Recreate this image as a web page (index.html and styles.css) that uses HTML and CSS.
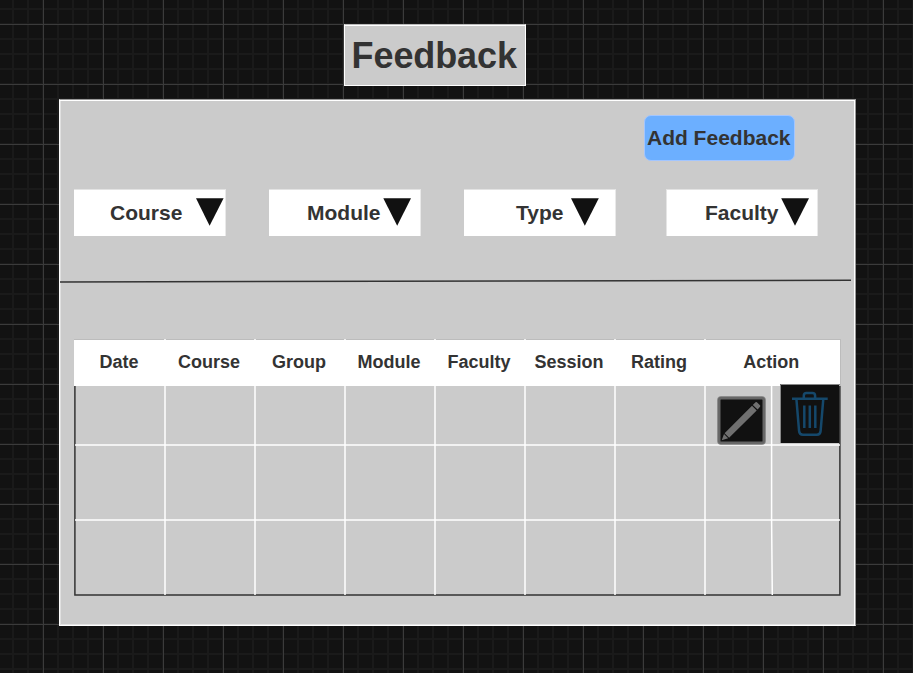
FILE: index.html
```html
<!DOCTYPE html>
<html lang="en">
<head>
<meta charset="utf-8">
<title>Feedback</title>
<link rel="stylesheet" href="styles.css">
</head>
<body>
<h1 class="title">Feedback</h1>
<main class="panel">
  <div class="toolbar"><button class="add">Add Feedback</button></div>
  <div class="filters">
    <div class="filter course"><span>Course</span><svg class="arrow" viewBox="0 0 28 28"><path d="M0 .3H27.6L13.6 27.8z"/></svg></div>
    <div class="filter module"><span>Module</span><svg class="arrow" viewBox="0 0 28 28"><path d="M.3 .3H28L14.2 27.8z"/></svg></div>
    <div class="filter type"><span>Type</span><svg class="arrow" viewBox="0 0 28 28"><path d="M0 .3H27.8L13.8 27.8z"/></svg></div>
    <div class="filter faculty"><span>Faculty</span><svg class="arrow" viewBox="0 0 28 28"><path d="M.2 .3H28L14 27.8z"/></svg></div>
  </div>
  <svg class="divider" viewBox="0 0 792 4"><path d="M0 2.9L791 1.2"/></svg>
  <section class="table">
    <div class="head">
      <span>Date</span><span>Course</span><span>Group</span><span>Module</span><span>Faculty</span><span>Session</span><span>Rating</span><span class="action">Action</span>
    </div>
    <div class="body">
      <svg class="rules" viewBox="0 0 767 257">
        <path class="frame" d="M.9 47V255.9H765.9V47"/>
        <path class="line" d="M91 0V256M181 0V256M271 0V256M361 0V256M451 0V256M541 0V256M631 0V256M697.6 47V181L698.3 256M1 105.9H766M1 180.9H766"/>
      </svg>
      <svg class="edit" viewBox="0 0 49 49">
        <rect x="2" y="2" width="45" height="45" rx="2" fill="#111" stroke="#666" stroke-width="3"/>
        <rect x=".6" y=".6" width="47.8" height="47.8" rx="3" fill="none" stroke="#858585" stroke-width=".7"/>
        <path fill="#707070" d="M4.7 44.3L7 38L11.2 42.2zM7.6 37.3L35 9.8L39.7 14.4L12.1 41.7zM35.8 8.9L38.5 6.2Q39.2 5.6 39.9 6.2L43 9.2Q43.6 9.9 43 10.7L40.6 13.5z"/>
      </svg>
      <svg class="delete" viewBox="0 0 60 60">
        <path fill="#111" d="M0 0H59.3V59H0z"/>
        <path fill="none" stroke="#888" d="M.5 59V.5H60"/>
        <g fill="none" stroke="#15486b" stroke-width="2.5">
          <path d="M12 14.8H47.7M23.8 14V11.7Q23.8 9 26.5 9H32.4Q35.1 9 35.1 11.7V14M16.4 15L19.1 47.2Q19.4 50.8 22.8 50.8H37Q40.3 50.8 40.6 47.2L43.3 15"/>
          <path d="M24.3 21.5V44M29.8 21.5V44M35.3 21.5V44"/>
        </g>
      </svg>
    </div>
  </section>
</main>
</body>
</html>
```
FILE: styles.css
```css
* { box-sizing: border-box; }

body {
  margin: 0;
  height: 673px;
  overflow: hidden;
  display: flex;
  flex-direction: column;
  padding: 24px 0 0 59px;
  font-family: "Liberation Sans", Arial, sans-serif;
  font-weight: bold;
  color: #333;
  background-color: #121212;
  background-image:
    linear-gradient(90deg, #3b3b3b 1px, transparent 1px),
    linear-gradient(#3b3b3b 1px, transparent 1px),
    linear-gradient(90deg, #1a1a1a 2px, transparent 2px),
    linear-gradient(#1a1a1a 2px, transparent 2px);
  background-size: 60px 60px, 60px 60px, 15px 15px, 15px 15px;
  background-position: 43px 0, 0 24px, 12px 0, 0 8px;
}

svg { display: block; }

.title {
  width: 182px;
  height: 62px;
  margin: 0 0 13px 285px;
  padding-left: 6.6px;
  border: 1px solid #fff;
  border-top-color: #bbb;
  box-shadow: inset 0 1px #fff;
  background: #cbcbcb;
  font-size: 36px;
  letter-spacing: -0.1px;
  line-height: 61px;
}

.panel {
  width: 797px;
  height: 527px;
  padding: 15px 0 0 14px;
  border: 1px solid #fff;
  border-top-color: #999;
  border-right-color: #999;
  box-shadow: inset 0 1px #fff, inset -1px 0 #fff, inset 1px 0 #e0e0e0, inset 0 -1px #e4e4e4;
  background: #cbcbcb;
}

.toolbar { padding-left: 570px; }

.add {
  display: block;
  width: 151px;
  height: 46px;
  padding: 0 1.5px 1px 0;
  border: 1px solid #a3c6ff;
  border-radius: 7px;
  background: #6cafff;
  color: #333;
  font: bold 21px "Liberation Sans", Arial, sans-serif;
  white-space: nowrap;
}

.filters { display: flex; margin-top: 28px; }

.filter {
  display: flex;
  width: 152px;
  height: 47px;
  margin-right: 43px;
  border-top: 1px solid #e3e3e3;
  border-right: 1px solid #e9e9e9;
  background: #fff;
  font-size: 21px;
  line-height: 46px;
}

.arrow { width: 28px; height: 28px; margin: 8px 0 0 auto; fill: #111; }
.course { padding-left: 36px; }
.course .arrow { margin-right: 1px; }
.module { padding-left: 38px; }
.module .arrow { margin-right: 9px; }
.type { padding-left: 52px; margin-right: 50px; }
.type .arrow { margin-right: 16px; }
.faculty { padding-left: 38px; margin-right: 0; border-left: 1px solid #e5e5e5; }
.faculty .arrow { margin-right: 8px; }

.divider {
  width: 792px;
  height: 4px;
  margin: 43px 0 0 -14px;
  fill: none;
  stroke: #333;
  stroke-width: 1.5;
}

.table { position: relative; width: 767px; height: 257px; margin-top: 56px; }

.head {
  display: grid;
  grid-template-columns: repeat(7, 90px) 1fr;
  height: 47px;
  border-top: 1px solid #bcbcbc;
  border-right: 1px solid #bcbcbc;
  background: #fff;
  font-size: 18px;
  line-height: 45px;
  text-align: center;
}

.action { padding-right: 1.5px; }

.rules { position: absolute; left: 0; top: 0; width: 767px; height: 257px; fill: none; stroke-width: 1.5; }
.frame { stroke: #333; }
.line { stroke: #fff; }
.edit { position: absolute; left: 643px; top: 57px; width: 49px; height: 49px; }
.delete { position: absolute; left: 706px; top: 45px; width: 60px; height: 60px; }
```
